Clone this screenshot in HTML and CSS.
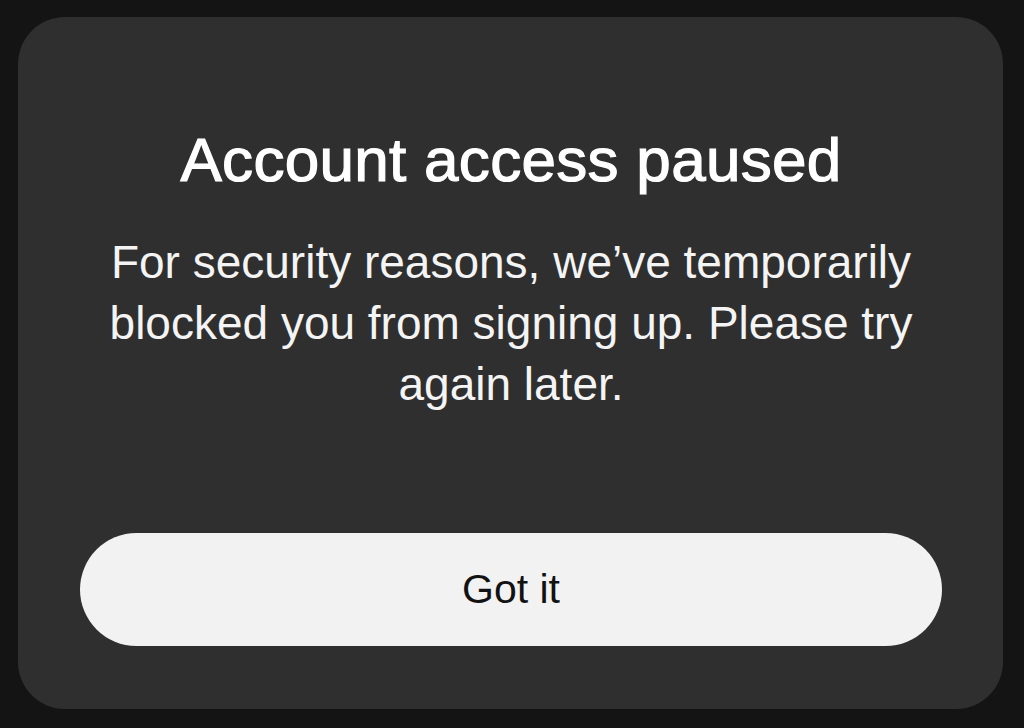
FILE: index.html
```html
<!DOCTYPE html>
<html lang="en">
<head>
<meta charset="utf-8">
<title>Account access paused</title>
<link rel="stylesheet" href="styles.css">
</head>
<body>
<div class="dialog">
  <h1 class="title">Account access paused</h1>
  <p class="message">For security reasons, we’ve temporarily blocked you from signing up. Please try again later.</p>
  <button class="btn" type="button">Got it</button>
</div>
</body>
</html>
```

FILE: styles.css
```css
html, body {
  margin: 0;
  padding: 0;
  background: #141414;
  width: 1024px;
  height: 728px;
  overflow: hidden;
}
body {
  padding: 17px 21px 19px 18px;
  box-sizing: border-box;
  font-family: "Liberation Sans", Arial, sans-serif;
}
.dialog {
  background: #2f2f2f;
  border-radius: 47px;
  height: 692px;
  box-sizing: border-box;
  padding: 108px 61px 63px 62px;
  display: flex;
  flex-direction: column;
  align-items: stretch;
}
.title {
  margin: 0;
  font-size: 62px;
  line-height: 70px;
  font-weight: 400;
  letter-spacing: 0.3px;
  -webkit-text-stroke: 1.2px #ffffff;
  color: #ffffff;
  text-align: center;
}
.message {
  margin: 37px 0 0;
  font-size: 46px;
  line-height: 61px;
  font-weight: 400;
  color: #f4f4f4;
  text-align: center;
}
.btn {
  margin-top: auto;
  height: 113px;
  border: none;
  border-radius: 57px;
  background: #f2f2f2;
  color: #121212;
  font-family: "Liberation Sans", Arial, sans-serif;
  font-size: 41px;
  line-height: 113px;
  padding: 0;
}
```
